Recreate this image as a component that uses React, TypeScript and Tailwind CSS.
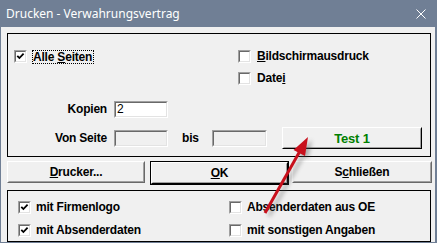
import React from 'react';

const ui = "font-['Liberation_Sans',Arial,sans-serif] font-bold text-[12px] leading-[13px] tracking-[-0.2px] text-black";

const Check: React.FC<{ checked?: boolean }> = ({ checked }) => (
  <span className="flex w-[13px] h-[13px] shrink-0 border border-[#a0a0a0] border-r-white border-b-white">
    <span className="flex flex-1 items-center justify-center border border-[#696969] border-r-[#e3e3e3] border-b-[#e3e3e3] bg-white">
      {checked && (
        <svg width="9" height="9" viewBox="0 0 9 9">
          <path d="M1.3 3.8 L3.4 6 L7.6 1.6" fill="none" stroke="#000" strokeWidth="1.8" />
        </svg>
      )}
    </span>
  </span>
);

const CheckRow: React.FC<{ checked?: boolean; gap?: string; children: React.ReactNode }> = ({
  checked,
  gap = 'gap-[6px]',
  children,
}) => (
  <div className={`flex items-center h-[13px] ${gap}`}>
    <Check checked={checked} />
    <span className="whitespace-nowrap">{children}</span>
  </div>
);

const Field: React.FC<{ value?: string; disabled?: boolean; className?: string }> = ({
  value = '',
  disabled,
  className = '',
}) => (
  <div className={`h-[17px] border border-[#a0a0a0] border-r-white border-b-white ${className}`}>
    <div
      className={`h-full border border-[#696969] border-r-[#e3e3e3] border-b-[#e3e3e3] pl-[1px] font-normal text-[12px] leading-[13px] ${
        disabled ? 'bg-[#f0f0f0]' : 'bg-white'
      }`}
    >
      {value}
    </div>
  </div>
);

const Btn: React.FC<{ className?: string; dark?: boolean; children: React.ReactNode }> = ({
  className = '',
  dark,
  children,
}) => (
  <div className={`h-[22px] ${className}`}>
    <div
      className={`h-full border border-white ${dark ? 'border-r-black border-b-black' : 'border-r-[#696969] border-b-[#696969]'}`}
    >
      <div className="h-full flex items-center justify-center border border-transparent border-r-[#a0a0a0] border-b-[#a0a0a0] bg-[#f0f0f0]">
        {children}
      </div>
    </div>
  </div>
);

export default function App() {
  return (
    <div className="relative w-[437px] h-[243px] bg-[#707f95] pl-px pr-[2px] pb-[2px] flex flex-col overflow-hidden">
      <div className="h-[27px] shrink-0 flex items-center justify-between pl-[5px] pr-[9px]">
        <span className="font-['Noto_Sans',sans-serif] text-[12px] text-white leading-none">
          Drucken - Verwahrungsvertrag
        </span>
        <svg width="10" height="10" viewBox="0 0 10 10">
          <path d="M0.5 0.5 L9.5 9.5 M9.5 0.5 L0.5 9.5" stroke="#fff" strokeWidth="1" />
        </svg>
      </div>

      <div className={`flex-1 bg-[#f0f0f0] pl-[6px] pt-[6px] flex flex-col ${ui}`}>
        {/* top group */}
        <div className="w-[424px] h-[124px] border border-black pl-[6px] pt-[16px] flex flex-col">
          <div className="flex">
            <div className="w-[224px]">
              <div className="flex items-center h-[13px] gap-[5px]">
                <Check checked />
                <span className="border border-dotted border-black h-[14px] leading-[12px] pr-px">
                  Alle <u>S</u>eiten
                </span>
              </div>
            </div>
            <div className="flex flex-col gap-[9px]">
              <CheckRow>
                <u>B</u>ildschirmausdruck
              </CheckRow>
              <CheckRow>
                Date<u>i</u>
              </CheckRow>
            </div>
          </div>

          <div className="flex items-center mt-[16px]">
            <span className="w-[93px] mr-[7px] text-right">Kopien</span>
            <Field value="2" className="w-[54px]" />
          </div>

          <div className="flex items-center h-[22px] mt-[9px]">
            <span className="w-[93px] mr-[7px] text-right">Von Seite</span>
            <Field disabled className="w-[54px]" />
            <span className="ml-[14px] w-[16px]">bis</span>
            <Field disabled className="ml-[14px] w-[55px]" />
            <Btn dark className="ml-[15px] w-[140px]">
              <span className="text-[#008000] text-[13px]">Test 1</span>
            </Btn>
          </div>
        </div>

        {/* buttons */}
        <div className="flex mt-[4px]">
          <Btn className="w-[138px]">
            <span>
              <u>D</u>rucker...
            </span>
          </Btn>
          <div className="ml-[5px] w-[139px] border border-black">
            <Btn className="h-[20px]" dark>
              <span>
                <u>O</u>K
              </span>
            </Btn>
          </div>
          <Btn className="ml-[3px] w-[140px]">
            <span>
              S<u>c</u>hließen
            </span>
          </Btn>
        </div>

        {/* bottom group */}
        <div className="w-[424px] h-[52px] mt-[5px] border border-black pl-[10px] pt-[10px] flex">
          <div className="w-[211px] flex flex-col gap-[10px]">
            <CheckRow checked gap="gap-[5px]">mit Firmenlogo</CheckRow>
            <CheckRow checked gap="gap-[5px]">mit Absenderdaten</CheckRow>
          </div>
          <div className="flex flex-col gap-[10px]">
            <CheckRow gap="gap-[5px]">Absenderdaten aus OE</CheckRow>
            <CheckRow gap="gap-[5px]">mit sonstigen Angaben</CheckRow>
          </div>
        </div>
      </div>

      {/* annotation arrow */}
      <svg className="absolute left-0 top-0 pointer-events-none" width="437" height="243" viewBox="0 0 437 243">
        <defs>
          <filter id="sh" x="-50%" y="-50%" width="200%" height="200%">
            <feGaussianBlur stdDeviation="2" />
          </filter>
        </defs>
        <g transform="translate(4 3)" filter="url(#sh)" opacity="0.45">
          <line x1="265" y1="213" x2="300" y2="151" stroke="#555" strokeWidth="3" />
          <polygon points="308,137 304,155 294,150" fill="#555" />
        </g>
        <line x1="265" y1="213" x2="300" y2="151" stroke="#c8101c" strokeWidth="3" />
        <polygon points="308,137 305,156 293.5,150" fill="#c8101c" />
      </svg>
    </div>
  );
}
